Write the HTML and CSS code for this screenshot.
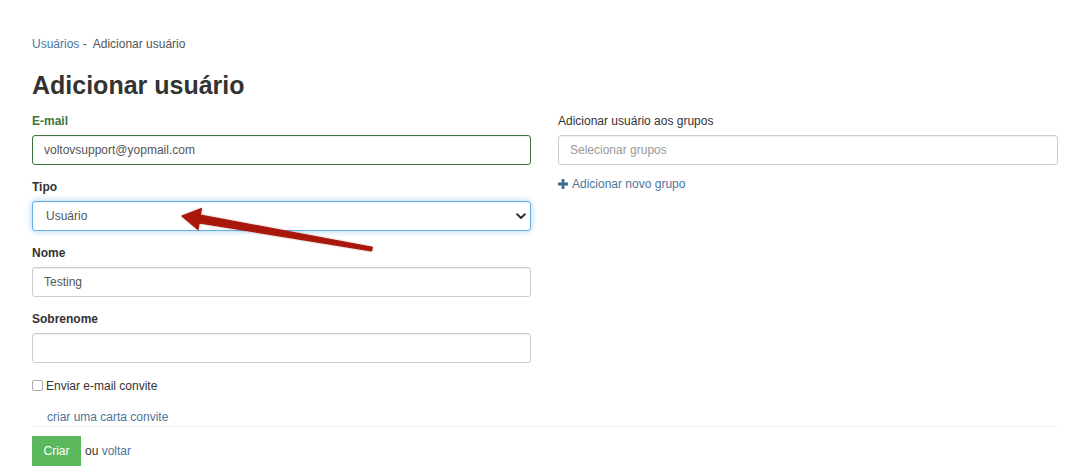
FILE: index.html
```html
<!DOCTYPE html>
<html lang="pt-BR">
<head>
    <meta charset="UTF-8">
    <title>Adicionar usuário</title>
    <link rel="stylesheet" href="styles.css">
</head>
<body>
<div class="page">
    <div class="breadcrumb">
        <a href="#">Usuários</a> -&nbsp; <span>Adicionar usuário</span>
    </div>
    <h1 class="title">Adicionar usuário</h1>

    <div class="columns">
        <div class="col">
            <div class="form-group has-success">
                <label>E-mail</label>
                <input type="text" class="form-control" value="voltovsupport@yopmail.com">
            </div>
            <div class="form-group">
                <label>Tipo</label>
                <div class="select-wrap">
                    <select class="form-control focused">
                        <option>Usuário</option>
                        <option>Administrador</option>
                    </select>
                    <svg class="chevron" width="10" height="7" viewBox="0 0 10 7">
                        <path d="M1.2 1.2 L5 5 L8.8 1.2" fill="none" stroke="#333" stroke-width="2" stroke-linecap="round" stroke-linejoin="round"/>
                    </svg>
                </div>
            </div>
            <div class="form-group">
                <label>Nome</label>
                <input type="text" class="form-control" value="Testing">
            </div>
            <div class="form-group">
                <label>Sobrenome</label>
                <input type="text" class="form-control">
            </div>
            <div class="check-row">
                <input type="checkbox" id="invite" class="check">
                <label for="invite">Enviar e-mail convite</label>
            </div>
        </div>

        <div class="col">
            <div class="form-group">
                <label class="plain">Adicionar usuário aos grupos</label>
                <input type="text" class="form-control" placeholder="Selecionar grupos">
            </div>
            <a href="#" class="add-group">
                <svg width="10" height="10" viewBox="0 0 10 10">
                    <path d="M3.6 0 H6.4 V3.6 H10 V6.4 H6.4 V10 H3.6 V6.4 H0 V3.6 H3.6 Z" fill="#3f6b95"/>
                </svg>
                Adicionar novo grupo
            </a>
        </div>
    </div>

    <div class="letter-row">
        <a href="#">criar uma carta convite</a>
    </div>

    <div class="actions">
        <button class="btn-create">Criar</button>
        <span>ou <a href="#">voltar</a></span>
    </div>

    <svg class="arrow" width="1072" height="473" viewBox="0 0 1072 473">
        <polygon points="182,216 201.4,208.6 200.3,215.2 372.3,247.3 371.5,250.8 199.1,222.8 198,229.6"
                 fill="#a8170a" stroke="#a8170a" stroke-width="1.2" stroke-linejoin="round"/>
    </svg>
</div>
</body>
</html>
```

FILE: styles.css
```css
body {
    margin: 0;
    background-color: #fff;
    font-family: "Liberation Sans", Arial, sans-serif;
    font-size: 12px;
    color: #333;
}
a {
    color: #4e7499;
    text-decoration: none;
}
.page {
    position: relative;
    width: 1026px;
    padding: 36px 14px 0 32px;
}
.breadcrumb {
    line-height: 16px;
    color: #555;
}
.title {
    margin: 18px 0 13px;
    font-size: 25px;
    line-height: 30px;
    font-weight: bold;
    color: #333;
}
.columns {
    display: grid;
    grid-template-columns: 499px 500px;
    column-gap: 27px;
}
.form-group {
    margin-bottom: 14px;
}
.form-group label {
    display: block;
    line-height: 16px;
    margin-bottom: 6px;
    font-weight: bold;
}
.form-group label.plain {
    font-weight: normal;
}
.has-success label {
    color: #3c763d;
}
.form-control {
    display: block;
    box-sizing: border-box;
    width: 100%;
    height: 30px;
    padding: 0 11px;
    font-family: "Liberation Sans", Arial, sans-serif;
    font-size: 12px;
    color: #555;
    background-color: #fff;
    border: 1px solid #ccc;
    border-radius: 3px;
    box-shadow: inset 0 1px 1px rgba(0, 0, 0, 0.075);
    outline: none;
}
.form-control::placeholder {
    color: #999;
}
.has-success .form-control {
    border-color: #3c763d;
}
.select-wrap {
    position: relative;
}
select.form-control {
    -webkit-appearance: none;
    appearance: none;
    padding-left: 13px;
}
.focused {
    border-color: #66afe9;
    box-shadow: inset 0 1px 1px rgba(0, 0, 0, 0.075), 0 0 6px rgba(102, 175, 233, 0.6);
}
.chevron {
    position: absolute;
    right: 5px;
    top: 12px;
}
.check-row {
    display: flex;
    align-items: center;
    margin-top: 15px;
    line-height: 16px;
}
.check {
    -webkit-appearance: none;
    appearance: none;
    width: 11px;
    height: 11px;
    margin: 0 3px 2px 0;
    border: 1px solid #aaa;
    border-radius: 2px;
    background: #fff;
}
.add-group {
    display: flex;
    align-items: center;
    gap: 4px;
    margin-top: -3px;
    line-height: 16px;
}
.letter-row {
    margin-top: 15px;
    padding: 0 0 1px 15px;
    line-height: 16px;
    border-bottom: 1px solid #eee;
}
.actions {
    display: flex;
    align-items: center;
    gap: 4px;
    margin-top: 9px;
}
.btn-create {
    width: 49px;
    height: 30px;
    padding: 0;
    border: none;
    border-radius: 0;
    background-color: #5cb85c;
    color: #fff;
    font-family: "Liberation Sans", Arial, sans-serif;
    font-size: 12px;
    cursor: pointer;
}
.arrow {
    position: absolute;
    left: 0;
    top: 0;
    pointer-events: none;
    filter: drop-shadow(0 0 1px rgba(120, 0, 0, 0.35));
}
```
